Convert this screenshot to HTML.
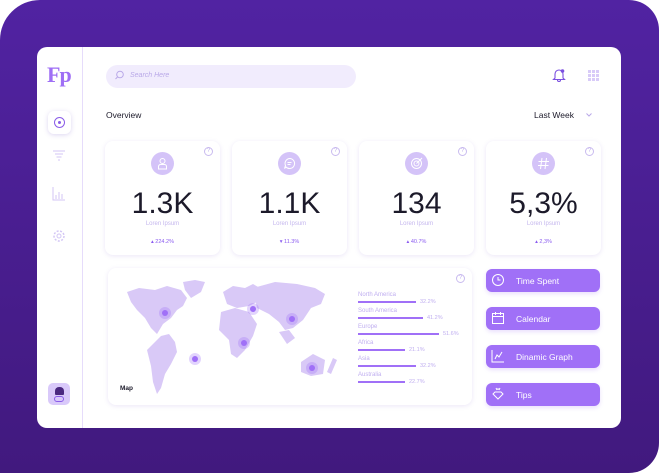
<!DOCTYPE html><html><head><style>
*{margin:0;padding:0;box-sizing:border-box}
body{width:659px;height:473px;overflow:hidden;font-family:"Liberation Sans",sans-serif;background:#fff;position:relative}
.bg{position:absolute;left:0;top:0;width:659px;height:473px;border-radius:40px 30px 30px 0;background:linear-gradient(180deg,#5123a2,#41197e)}
.card{position:absolute;left:37px;top:47px;width:584px;height:381px;background:#fff;border-radius:10px;overflow:hidden}
.side{position:absolute;left:82px;top:47px;width:1px;height:381px;background:#e6dcfb}
.abs{position:absolute}
.search{left:106px;top:65px;width:250px;height:23px;border-radius:12px;background:#f1ecfd;color:#b9a8e8;font-size:7px;font-style:italic;padding:7px 0 0 24px}
.stat{position:absolute;top:141px;width:115px;height:114px;border-radius:8px;background:#fff;box-shadow:0 1px 5px rgba(120,90,200,.15);text-align:center}
.stat .ic{position:absolute;left:46px;top:11px;width:23px;height:23px;border-radius:50%;background:#d4c3f8}
.stat .ic svg{position:absolute;left:5px;top:5px}
.stat .n{position:absolute;left:0;right:0;top:46px;font-size:30px;color:#1c1a2a}
.stat .l{position:absolute;left:0;right:0;top:80px;font-size:6px;color:#c5b7ee}
.stat .p{position:absolute;left:0;right:0;top:98px;font-size:5.5px;color:#8b5cf0}
.q{position:absolute;right:7px;top:6px;width:9px;height:9px;border:1px solid #c9bbef;border-radius:50%;font-size:6px;color:#c0b0ec;line-height:7px;text-align:center}
.btn{position:absolute;left:486px;width:114px;height:23px;border-radius:6px;background:#a070f7;color:#fff;font-size:8.5px;padding:7px 0 0 30px;box-shadow:0 2px 4px rgba(150,100,240,.2)}
.btn svg{position:absolute;left:5px;top:4px}
.leg{position:absolute;left:358px;font-size:6px;color:#c0aff0}
.leg i{position:absolute;left:0;top:9px;height:2px;background:#a070f7}
.leg b{position:absolute;top:7px;font-weight:normal;font-size:5.5px}
</style></head><body>
<div class="bg"></div>
<div class="card"></div>
<div class="side"></div>
<div class="abs" style="left:47px;top:62px;font-family:'Liberation Serif',serif;font-weight:bold;font-size:22px;color:#9f6ff5;letter-spacing:-1px">Fp</div>
<div class="abs" style="left:48px;top:111px;width:23px;height:23px;border-radius:6px;background:#fff;box-shadow:0 1px 5px rgba(120,90,200,.25)"><div style="position:absolute;left:6px;top:6px;width:11px;height:11px;border:1.5px solid #8a5ce8;border-radius:50%"></div><div style="position:absolute;left:10px;top:10px;width:3px;height:3px;background:#8a5ce8;border-radius:50%"></div></div>
<svg class="abs" style="left:52px;top:150px" width="14" height="12"><g stroke="#d3c6f5" stroke-width="1"><line x1="1" y1="1" x2="13" y2="1"/><line x1="3" y1="4" x2="11" y2="4"/><line x1="4.5" y1="7" x2="9.5" y2="7"/><line x1="6" y1="10" x2="8" y2="10"/></g></svg>
<svg class="abs" style="left:52px;top:187px" width="14" height="14"><g stroke="#d3c6f5" stroke-width="1" fill="none"><path d="M1 0V13H13"/><path d="M4 12V8M7 12V5M10 12V7"/></g></svg>
<svg class="abs" style="left:52px;top:229px" width="14" height="14"><circle cx="7" cy="7" r="5" stroke="#d3c6f5" fill="none" stroke-width="1.5" stroke-dasharray="2 1.5"/><circle cx="7" cy="7" r="2" stroke="#d3c6f5" fill="none"/></svg>
<div class="abs" style="left:48px;top:383px;width:22px;height:22px;border-radius:5px;background:#d9c9fa"><div style="position:absolute;left:7px;top:4px;width:9px;height:8px;border-radius:4px 4px 1px 1px;background:#4a2880"></div><div style="position:absolute;left:6px;top:13px;width:10px;height:6px;border:1px solid #8a5ce8;border-radius:3px"></div></div>
<div class="abs search">Search Here</div>
<svg class="abs" style="left:115px;top:70px" width="10" height="10"><circle cx="5" cy="4.5" r="3.3" stroke="#b9a8e8" fill="none"/><line x1="2.5" y1="7" x2="0.5" y2="9" stroke="#b9a8e8"/></svg>
<svg class="abs" style="left:552px;top:68px" width="14" height="14"><path d="M3 10V6a4 4 0 0 1 8 0v4l1.5 1.5h-11zM5.5 12a1.5 1.5 0 0 0 3 0" stroke="#7b4fe0" fill="none" stroke-width="1.1"/><circle cx="10.5" cy="3" r="1.8" fill="#7b4fe0"/></svg>
<svg class="abs" style="left:588px;top:70px" width="12" height="12"><g fill="#d8cbf8"><rect x="0" y="0" width="3" height="3"/><rect x="4" y="0" width="3" height="3"/><rect x="8" y="0" width="3" height="3"/><rect x="0" y="4" width="3" height="3"/><rect x="4" y="4" width="3" height="3"/><rect x="8" y="4" width="3" height="3"/><rect x="0" y="8" width="3" height="3"/><rect x="4" y="8" width="3" height="3"/><rect x="8" y="8" width="3" height="3"/></g></svg>
<div class="abs" style="left:106px;top:110px;font-size:8.5px;color:#1c1a2a">Overview</div>
<div class="abs" style="left:534px;top:110px;font-size:8.5px;color:#1c1a2a">Last Week</div>
<svg class="abs" style="left:586px;top:113px" width="6" height="4"><path d="M0.5 0.5L3 3 5.5 0.5" stroke="#b9a8e8" fill="none"/></svg>
<div class="stat" style="left:105px"><div class="ic"><svg width="13" height="13"><circle cx="6.5" cy="4" r="2.5" stroke="#fff" fill="none"/><path d="M2.5 12V9.5a2 2 0 0 1 2-2h4a2 2 0 0 1 2 2V12Z" stroke="#fff" fill="none"/></svg></div><div class="q">?</div><div class="n">1.3K</div><div class="l">Loren Ipsum</div><div class="p">▴ 224.2%</div></div>
<div class="stat" style="left:232px"><div class="ic"><svg width="13" height="13"><path d="M6.5 1.5a5 5 0 1 1-3.5 8.5L1.5 11.5 2.5 8.5a5 5 0 0 1 4-7Z" stroke="#fff" fill="none"/><path d="M4.5 5.5h4M4.5 7.5h3" stroke="#fff"/></svg></div><div class="q">?</div><div class="n">1.1K</div><div class="l">Loren Ipsum</div><div class="p">▾ 11.3%</div></div>
<div class="stat" style="left:359px"><div class="ic"><svg width="13" height="13"><circle cx="6.5" cy="6.5" r="5" stroke="#fff" fill="none"/><circle cx="6.5" cy="6.5" r="2.5" stroke="#fff" fill="none"/><path d="M6.5 6.5L12 1" stroke="#fff"/></svg></div><div class="q">?</div><div class="n">134</div><div class="l">Loren Ipsum</div><div class="p">▴ 40.7%</div></div>
<div class="stat" style="left:486px"><div class="ic"><svg width="13" height="13"><path d="M5 1L3.5 12M9.5 1L8 12M1.5 4.5H12M1 8.5H11.5" stroke="#fff"/></svg></div><div class="q">?</div><div class="n">5,3%</div><div class="l">Loren Ipsum</div><div class="p">▴ 2,3%</div></div>
<div class="abs" style="left:108px;top:268px;width:364px;height:137px;border-radius:8px;background:#fff;box-shadow:0 1px 5px rgba(120,90,200,.15)"><div class="q">?</div></div>
<svg class="abs" style="left:125px;top:278px" width="220" height="120" viewBox="0 0 220 120"><g fill="#d9c9f7">
<path d="M2 14L14 10 30 12 42 8 56 12 62 20 58 28 52 32 46 40 38 46 32 56 26 50 20 40 12 32 6 24Z"/>
<path d="M58 4L70 2 80 4 76 14 66 20 60 12Z"/>
<path d="M36 58L44 56 50 64 52 74 46 86 40 96 36 110 32 116 28 104 26 88 22 72Z"/>
<path d="M98 14L108 8 120 10 128 6 142 14 136 22 124 28 112 30 102 26Z"/>
<path d="M128 10L150 4 172 6 190 10 200 16 196 26 186 30 178 42 168 50 160 52 154 44 144 36 132 30 130 20Z"/>
<path d="M96 34L110 30 124 34 132 46 128 58 120 72 112 80 106 76 104 62 94 52Z"/>
<path d="M154 54L164 52 170 60 162 66Z"/>
<path d="M176 84L188 76 200 82 198 96 186 98 176 94Z"/>
<path d="M208 80L212 82 206 96 202 94Z"/></g>
<g fill="#a070f7"><circle cx="40" cy="35" r="6" opacity=".3"/><circle cx="40" cy="35" r="3"/><circle cx="70" cy="81" r="6" opacity=".3"/><circle cx="70" cy="81" r="3"/><circle cx="119" cy="65" r="6" opacity=".3"/><circle cx="119" cy="65" r="3"/><circle cx="128" cy="31" r="6" opacity=".3"/><circle cx="128" cy="31" r="3"/><circle cx="167" cy="41" r="6" opacity=".3"/><circle cx="167" cy="41" r="3"/><circle cx="187" cy="90" r="6" opacity=".3"/><circle cx="187" cy="90" r="3"/></g></svg>
<div class="abs" style="left:120px;top:385px;font-size:6.5px;font-weight:bold;color:#1c1a2a">Map</div>
<div class="leg" style="top:292px">North America<i style="width:58px"></i><b style="left:62px">32.2%</b></div>
<div class="leg" style="top:308px">South America<i style="width:65px"></i><b style="left:69px">41.2%</b></div>
<div class="leg" style="top:324px">Europe<i style="width:81px"></i><b style="left:85px">51.6%</b></div>
<div class="leg" style="top:340px">Africa<i style="width:47px"></i><b style="left:51px">21.1%</b></div>
<div class="leg" style="top:356px">Asia<i style="width:58px"></i><b style="left:62px">32.2%</b></div>
<div class="leg" style="top:372px">Australia<i style="width:47px"></i><b style="left:51px">22.7%</b></div>
<div class="btn" style="top:269px"><svg width="14" height="14"><circle cx="7" cy="7" r="5.5" stroke="#fff" fill="none"/><path d="M7 4V7H9.5" stroke="#fff" fill="none"/></svg>Time Spent</div>
<div class="btn" style="top:307px"><svg width="14" height="14"><rect x="1.5" y="2.5" width="11" height="10" stroke="#fff" fill="none"/><path d="M1.5 5.5H12.5M4.5 1V4M9.5 1V4" stroke="#fff"/></svg>Calendar</div>
<div class="btn" style="top:345px"><svg width="14" height="14"><path d="M1 1V13H13M4 10L6 6 8 8 11 3" stroke="#fff" fill="none"/></svg>Dinamic Graph</div>
<div class="btn" style="top:383px"><svg width="14" height="14"><path d="M2 7L4 5H10L12 7 7 12Z" stroke="#fff" fill="none"/><path d="M5 1L6 3M9 1L8 3M7 1V3" stroke="#fff"/></svg>Tips</div>
</body></html>
